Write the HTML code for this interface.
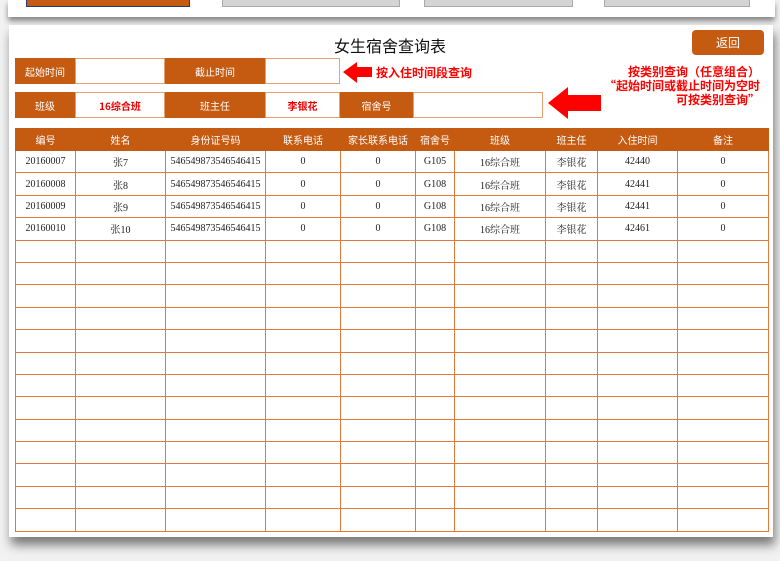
<!DOCTYPE html>
<html><head><meta charset="utf-8"><style>
*{margin:0;padding:0;box-sizing:border-box}
body{width:780px;height:561px;background:#f2f2f2;position:relative;overflow:hidden;font-family:"Liberation Serif","Noto Serif CJK SC","Noto Sans CJK SC",serif;}
.top{position:absolute;left:8px;top:0;width:767px;height:17px;background:#fff;box-shadow:0 4px 6px rgba(0,0,0,.45)}
.tab{position:absolute;top:0;height:7px;background:#d4d4d4;border:1px solid #aaa;border-top:none}
.main{position:absolute;left:9px;top:25px;width:764px;height:512px;background:#fff;box-shadow:2px 8px 10px rgba(0,0,0,.5)}
.abs{position:absolute}
.lab{position:absolute;background:#c55a11;color:#fff;font-size:10px;display:flex;align-items:center;justify-content:center;font-family:"Noto Sans CJK SC",sans-serif}
.box{position:absolute;background:#fff;border:1px solid #e8a070;color:#e00;font-size:10px;display:flex;align-items:center;justify-content:center;font-family:"Noto Sans CJK SC",sans-serif;font-weight:bold}
table{position:absolute;left:15px;top:128px;border-collapse:collapse;table-layout:fixed}
td,th{border:1.5px solid #e07a3a;font-size:10px;text-align:center;height:22.4px;font-weight:normal;color:#222}
th{background:#c55a11;color:#fff;height:22px;font-family:"Noto Sans CJK SC",sans-serif;border-color:#c55a11}
.red{color:#f00;font-weight:bold;font-family:"Noto Sans CJK SC",sans-serif;font-size:12px;position:absolute}
</style></head><body>
<div class="top"></div>
<div class="abs" style="left:26px;top:0;width:164px;height:7px;background:#c55a11;border:1px solid #1f3d7a;border-top:none"></div>
<div class="tab" style="left:222px;width:178px"></div>
<div class="tab" style="left:424px;width:149px"></div>
<div class="tab" style="left:604px;width:146px"></div>
<div class="main"></div>
<div class="abs" style="left:0;top:33px;width:780px;text-align:center;font-size:16px;font-family:'Noto Sans CJK SC',sans-serif;color:#111">女生宿舍查询表</div>
<div class="abs" style="left:692px;top:30px;width:72px;height:25px;background:#c55a11;border-radius:4px;color:#fff;font-size:12px;display:flex;align-items:center;justify-content:center;font-family:'Noto Sans CJK SC',sans-serif">返回</div>

<div class="lab" style="left:15px;top:58px;width:60px;height:26px">起始时间</div>
<div class="box" style="left:75px;top:58px;width:90px;height:26px"></div>
<div class="lab" style="left:165px;top:58px;width:100px;height:26px">截止时间</div>
<div class="box" style="left:265px;top:58px;width:75px;height:26px"></div>

<div class="lab" style="left:15px;top:92px;width:60px;height:26px">班级</div>
<div class="box" style="left:75px;top:92px;width:90px;height:26px">16综合班</div>
<div class="lab" style="left:165px;top:92px;width:100px;height:26px">班主任</div>
<div class="box" style="left:265px;top:92px;width:75px;height:26px">李银花</div>
<div class="lab" style="left:340px;top:92px;width:73px;height:26px">宿舍号</div>
<div class="box" style="left:413px;top:92px;width:130px;height:26px"></div>

<svg class="abs" style="left:0;top:0" width="780" height="130">
<polygon points="343,72 357,62 357,67 372,67 372,77 357,77 357,83" fill="#f00"/>
<polygon points="548,103 568,87 568,95 601,95 601,111 568,111 568,119" fill="#f00"/>
</svg>
<div class="red" style="left:376px;top:64px">按入住时间段查询</div>
<div class="red" style="left:560px;top:65px;width:200px;text-align:right;line-height:14px">按类别查询（任意组合）<br>“起始时间或截止时间为空时<br>可按类别查询”</div>

<table>
<colgroup><col style="width:60px"><col style="width:90px"><col style="width:100px"><col style="width:75px"><col style="width:75px"><col style="width:39px"><col style="width:91px"><col style="width:52px"><col style="width:80px"><col style="width:91px"></colgroup>
<tr><th>编号</th><th>姓名</th><th>身份证号码</th><th>联系电话</th><th>家长联系电话</th><th>宿舍号</th><th>班级</th><th>班主任</th><th>入住时间</th><th>备注</th></tr>
<tr><td>20160007</td><td>张7</td><td>546549873546546415</td><td>0</td><td>0</td><td>G105</td><td>16综合班</td><td>李银花</td><td>42440</td><td>0</td></tr>
<tr><td>20160008</td><td>张8</td><td>546549873546546415</td><td>0</td><td>0</td><td>G108</td><td>16综合班</td><td>李银花</td><td>42441</td><td>0</td></tr>
<tr><td>20160009</td><td>张9</td><td>546549873546546415</td><td>0</td><td>0</td><td>G108</td><td>16综合班</td><td>李银花</td><td>42441</td><td>0</td></tr>
<tr><td>20160010</td><td>张10</td><td>546549873546546415</td><td>0</td><td>0</td><td>G108</td><td>16综合班</td><td>李银花</td><td>42461</td><td>0</td></tr>
<tr><td></td><td></td><td></td><td></td><td></td><td></td><td></td><td></td><td></td><td></td></tr>
<tr><td></td><td></td><td></td><td></td><td></td><td></td><td></td><td></td><td></td><td></td></tr>
<tr><td></td><td></td><td></td><td></td><td></td><td></td><td></td><td></td><td></td><td></td></tr>
<tr><td></td><td></td><td></td><td></td><td></td><td></td><td></td><td></td><td></td><td></td></tr>
<tr><td></td><td></td><td></td><td></td><td></td><td></td><td></td><td></td><td></td><td></td></tr>
<tr><td></td><td></td><td></td><td></td><td></td><td></td><td></td><td></td><td></td><td></td></tr>
<tr><td></td><td></td><td></td><td></td><td></td><td></td><td></td><td></td><td></td><td></td></tr>
<tr><td></td><td></td><td></td><td></td><td></td><td></td><td></td><td></td><td></td><td></td></tr>
<tr><td></td><td></td><td></td><td></td><td></td><td></td><td></td><td></td><td></td><td></td></tr>
<tr><td></td><td></td><td></td><td></td><td></td><td></td><td></td><td></td><td></td><td></td></tr>
<tr><td></td><td></td><td></td><td></td><td></td><td></td><td></td><td></td><td></td><td></td></tr>
<tr><td></td><td></td><td></td><td></td><td></td><td></td><td></td><td></td><td></td><td></td></tr>
<tr><td></td><td></td><td></td><td></td><td></td><td></td><td></td><td></td><td></td><td></td></tr>
</table>
</body></html>
